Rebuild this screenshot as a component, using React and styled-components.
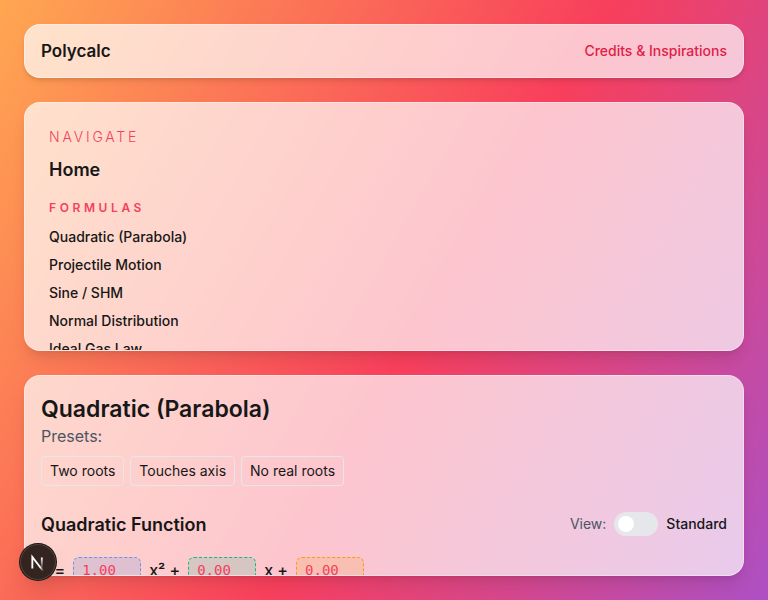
import React, { useState } from "react";
import styled, { createGlobalStyle } from "styled-components";

const GlobalStyle = createGlobalStyle`
  *, *::before, *::after { box-sizing: border-box; }
  body {
    margin: 0;
    font-family: Inter, sans-serif;
    font-size: 16px;
    line-height: 24px;
    color: #171717;
    -webkit-font-smoothing: antialiased;
  }
  h1, h2, h3, p, ul { margin: 0; padding: 0; }
  button, input { font: inherit; color: inherit; }
`;

const Page = styled.div`
  display: grid;
  grid-template-rows: auto minmax(0, 83fr) minmax(0, 67fr);
  gap: 24px;
  height: 100vh;
  padding: 24px;
  overflow: hidden;
  background: linear-gradient(120deg, #ffa751 0%, #f83f5c 55%, #ad50c4 100%);
`;

const Glass = styled.div`
  border: 1px solid rgba(255, 255, 255, 0.4);
  border-radius: 16px;
  background: rgba(255, 255, 255, 0.7);
  box-shadow: ${({ $raised }) =>
    $raised
      ? "0 10px 15px -3px rgba(0, 0, 0, 0.1), 0 4px 6px -4px rgba(0, 0, 0, 0.1)"
      : "0 4px 6px -1px rgba(0, 0, 0, 0.1), 0 2px 4px -2px rgba(0, 0, 0, 0.1)"};
`;

const Header = styled(Glass)`
  display: flex;
  align-items: center;
  justify-content: space-between;
  padding: 12px 16px;
`;

const Brand = styled.a`
  font-size: 17px;
  line-height: 28px;
  font-weight: 600;
  color: inherit;
  text-decoration: none;
`;

const CreditsLink = styled.a`
  font-size: 14px;
  line-height: 20px;
  font-weight: 500;
  color: #e11d48;
  text-decoration: none;
`;

const Sidebar = styled(Glass)`
  padding: 24px;
  overflow: hidden;
`;

const NavHeading = styled.h2`
  font-size: 14px;
  line-height: 20px;
  font-weight: 300;
  letter-spacing: 0.2em;
  text-transform: uppercase;
  color: #f43f5e;
`;

const HomeLink = styled.a`
  display: block;
  margin: 9px 0 16px;
  font-size: 18px;
  line-height: 28px;
  font-weight: 600;
  color: inherit;
  text-decoration: none;
`;

const SectionLabel = styled.h3`
  margin-bottom: 11px;
  font-size: 12px;
  line-height: 16px;
  font-weight: 600;
  letter-spacing: 0.3em;
  text-transform: uppercase;
  color: #f43f5e;
`;

const FormulaList = styled.ul`
  display: flex;
  flex-direction: column;
  gap: 8px;
  list-style: none;
  font-size: 14px;
  line-height: 20px;
`;

const FormulaLink = styled.a`
  display: block;
  font-weight: 500;
  color: inherit;
  text-decoration: none;
`;

const Main = styled(Glass)`
  padding: 16px;
  overflow: hidden;
`;

const Title = styled.h1`
  font-size: 23px;
  line-height: 34px;
  font-weight: 600;
`;

const PresetsLabel = styled.p`
  line-height: 20px;
  color: #4b5563;
`;

const PresetRow = styled.div`
  display: flex;
  flex-wrap: wrap;
  gap: 6px;
  margin: 10px 0 24px;
`;

const PresetButton = styled.button`
  padding: 4px 8px;
  border: 1px solid #e5e7eb;
  border-radius: 4px;
  background: transparent;
  font-size: 14px;
  line-height: 20px;
`;

const FunctionHeader = styled.div`
  display: flex;
  align-items: flex-start;
  justify-content: space-between;
`;

const FunctionTitle = styled.h2`
  font-size: 18px;
  line-height: 30px;
  font-weight: 600;
`;

const ViewControl = styled.label`
  display: flex;
  align-items: center;
  gap: 8px;
  min-height: 28px;
  font-size: 14px;
  line-height: 20px;
  color: #4b5563;
`;

const ViewMode = styled.span`
  font-weight: 500;
  color: #171717;
`;

const Switch = styled.input`
  appearance: none;
  display: flex;
  align-items: center;
  width: 44px;
  height: 24px;
  margin: 0;
  padding: 0 4px;
  border-radius: 12px;
  background: #e5e7eb;
  justify-content: ${({ checked }) => (checked ? "flex-end" : "flex-start")};

  &::before {
    content: "";
    width: 16px;
    height: 16px;
    border-radius: 50%;
    background: #fff;
  }
`;

const Equation = styled.div`
  display: flex;
  align-items: center;
  gap: 8px;
  margin-top: 17px;
  font-size: 16px;
  font-weight: 500;
  line-height: 24px;
`;

const tones = {
  blue: ["#6495ed", "rgba(99, 140, 220, 0.2)"],
  green: ["#10b981", "rgba(16, 185, 129, 0.16)"],
  amber: ["#f59e0b", "rgba(245, 158, 11, 0.16)"],
};

const Coefficient = styled.input`
  width: 68px;
  height: 26px;
  padding: 0 8px;
  border: 1px dashed ${({ $tone }) => tones[$tone][0]};
  border-radius: 6px;
  background: ${({ $tone }) => tones[$tone][1]};
  font-family: "DejaVu Sans Mono", monospace;
  font-size: 14px;
  font-weight: 400;
  color: #f43f5e;
`;

const DevBadge = styled.button`
  position: fixed;
  left: 20px;
  bottom: 20px;
  width: 36px;
  height: 36px;
  padding: 0;
  border: 0;
  border-radius: 50%;
  background: #33241f;
  box-shadow: 0 0 0 1px #171717, inset 0 0 0 1px rgba(255, 255, 255, 0.14),
    0 16px 32px -8px rgba(0, 0, 0, 0.24);

  svg { display: block; }
`;

const formulas = [
  "Quadratic (Parabola)",
  "Projectile Motion",
  "Sine / SHM",
  "Normal Distribution",
  "Ideal Gas Law",
];

const presets = [
  { name: "Two roots", values: ["1.00", "0.00", "-4.00"] },
  { name: "Touches axis", values: ["1.00", "-2.00", "1.00"] },
  { name: "No real roots", values: ["1.00", "0.00", "2.00"] },
];

function NextMark() {
  return (
    <svg width="36" height="36" viewBox="0 0 36 36" fill="none" aria-hidden="true">
      <g transform="translate(10 12)">
        <path d="M13.3 15.2 L2.34 1 V12.6" stroke="url(#mark-diagonal)" strokeWidth="1.86" />
        <path d="M11.825 1.5 V13.1" stroke="url(#mark-stem)" strokeWidth="1.86" />
      </g>
      <defs>
        <linearGradient id="mark-diagonal" gradientUnits="userSpaceOnUse" x1="9.956" y1="11.123" x2="15.478" y2="17.967">
          <stop stopColor="#fff" />
          <stop offset="0.604" stopColor="#fff" stopOpacity="0" />
        </linearGradient>
        <linearGradient id="mark-stem" gradientUnits="userSpaceOnUse" x1="11.822" y1="1.4" x2="11.791" y2="13.1">
          <stop stopColor="#fff" />
          <stop offset="1" stopColor="#fff" stopOpacity="0" />
        </linearGradient>
      </defs>
    </svg>
  );
}

export default function App() {
  const [values, setValues] = useState(["1.00", "0.00", "0.00"]);
  const [vertex, setVertex] = useState(false);

  const update = (index) => (event) =>
    setValues(values.map((v, i) => (i === index ? event.target.value : v)));

  return (
    <>
      <GlobalStyle />
      <Page>
        <Header as="header">
          <Brand href="#">Polycalc</Brand>
          <CreditsLink href="#credits">Credits &amp; Inspirations</CreditsLink>
        </Header>

        <Sidebar as="nav" $raised>
          <NavHeading>Navigate</NavHeading>
          <HomeLink href="#">Home</HomeLink>
          <SectionLabel>Formulas</SectionLabel>
          <FormulaList>
            {formulas.map((name) => (
              <li key={name}>
                <FormulaLink href="#formula">{name}</FormulaLink>
              </li>
            ))}
          </FormulaList>
        </Sidebar>

        <Main as="main" $raised>
          <Title>Quadratic (Parabola)</Title>
          <PresetsLabel>Presets:</PresetsLabel>
          <PresetRow>
            {presets.map((preset) => (
              <PresetButton key={preset.name} type="button" onClick={() => setValues(preset.values)}>
                {preset.name}
              </PresetButton>
            ))}
          </PresetRow>
          <FunctionHeader>
            <FunctionTitle>Quadratic Function</FunctionTitle>
            <ViewControl>
              View:
              <Switch
                type="checkbox"
                role="switch"
                checked={vertex}
                onChange={(event) => setVertex(event.target.checked)}
              />
              <ViewMode>{vertex ? "Vertex" : "Standard"}</ViewMode>
            </ViewControl>
          </FunctionHeader>
          <Equation>
            <span>y =</span>
            <Coefficient $tone="blue" aria-label="Coefficient a" value={values[0]} onChange={update(0)} />
            <span>x² +</span>
            <Coefficient $tone="green" aria-label="Coefficient b" value={values[1]} onChange={update(1)} />
            <span>x +</span>
            <Coefficient $tone="amber" aria-label="Coefficient c" value={values[2]} onChange={update(2)} />
          </Equation>
        </Main>
      </Page>
      <DevBadge type="button" aria-label="Open developer tools">
        <NextMark />
      </DevBadge>
    </>
  );
}
